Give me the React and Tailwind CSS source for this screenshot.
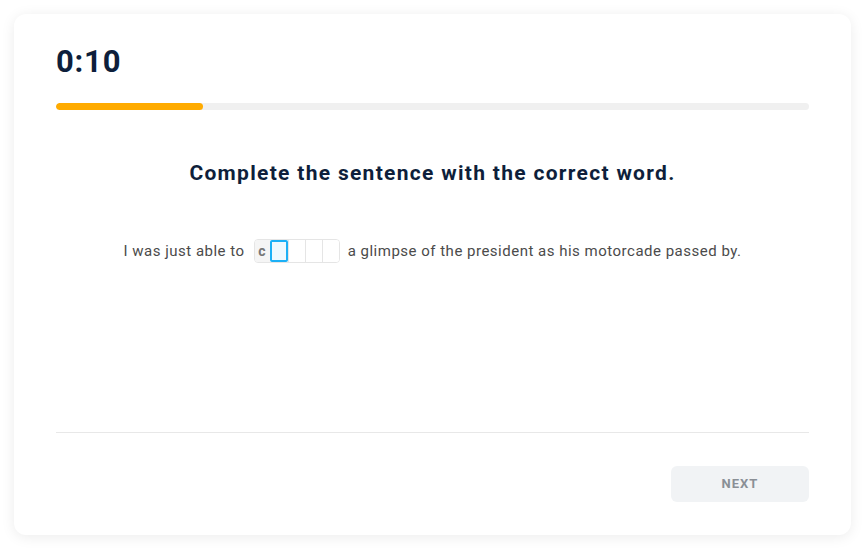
export default function App() {
  const progress = 19.5
  const cells = ['', '', '', '']

  return (
    <div className="w-[865px] h-[549px] bg-white p-[14px] font-['Roboto',sans-serif]">
      <div className="h-[521px] rounded-xl bg-white shadow-[0_2px_14px_rgba(0,0,0,0.08)] px-[42px] pt-[30px] flex flex-col">
        <div className="text-[31px] leading-[36px] font-bold text-[#0e1f3b] tracking-[0.8px]">0:10</div>

        <div className="mt-[23px] h-[7px] rounded-full bg-[#f0f0f0] overflow-hidden">
          <div className="h-full rounded-full bg-[#ffab00]" style={{ width: `${progress}%` }} />
        </div>

        <h1 className="mt-[49px] text-center text-[21px] leading-[28px] font-bold text-[#0e1f3b] tracking-[1.3px]">
          Complete the sentence with the correct word.
        </h1>

        <div className="mt-[52px] flex items-center justify-center text-[15px] text-[#4b4b4b] tracking-[0.5px]">
          <span>I was just able to</span>
          <div className="ml-[9px] mr-[8px] flex h-[24px] rounded border border-[#e5e5e5] overflow-hidden">
            <div className="w-[15px] flex items-center justify-center bg-[#f5f5f5] text-[#777] font-bold text-[14px]">c</div>
            <div className="w-[18px] border-2 border-[#1cb0f6] bg-[#eef9ff] rounded-[2px]" />
            {cells.slice(1).map((c, i) => (
              <div key={i} className="w-[17px] border-l border-[#e5e5e5] bg-white" />
            ))}
          </div>
          <span>a glimpse of the president as his motorcade passed by.</span>
        </div>

        <div className="flex-1" />

        <div className="border-t border-[#e8e8e8]" />
        <div className="flex justify-end pt-[33px] pb-[33px]">
          <button className="w-[138px] h-[36px] rounded-md bg-[#f1f3f5] text-[13px] font-bold tracking-[1px] text-[#8a8f96]">
            NEXT
          </button>
        </div>
      </div>
    </div>
  )
}
